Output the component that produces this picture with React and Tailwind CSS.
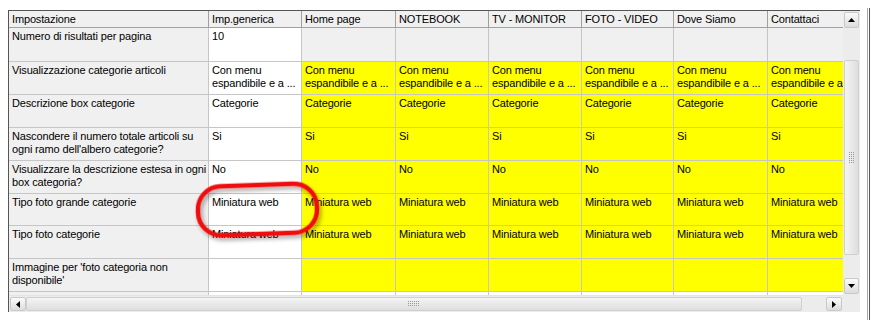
import React from "react";

const cols = [
  { name: "Home page", w: 94 },
  { name: "NOTEBOOK", w: 93 },
  { name: "TV - MONITOR", w: 93 },
  { name: "FOTO - VIDEO", w: 92 },
  { name: "Dove Siamo", w: 94 },
  { name: "Contattaci", w: 94 },
];

const rows = [
  { label: ["Numero di risultati per pagina"], gen: ["10"], val: null, h: 34 },
  { label: ["Visualizzazione categorie articoli"], gen: ["Con menu", "espandibile e a ..."], val: ["Con menu", "espandibile e a ..."], h: 33 },
  { label: ["Descrizione box categorie"], gen: ["Categorie"], val: ["Categorie"], h: 33 },
  { label: ["Nascondere il numero totale articoli su", "ogni ramo dell'albero categorie?"], gen: ["Si"], val: ["Si"], h: 33 },
  { label: ["Visualizzare la descrizione estesa in ogni", "box categoria?"], gen: ["No"], val: ["No"], h: 33 },
  { label: ["Tipo foto grande categorie"], gen: ["Miniatura web"], val: ["Miniatura web"], h: 32 },
  { label: ["Tipo foto categorie"], gen: ["Miniatura web"], val: ["Miniatura web"], h: 33 },
  { label: ["Immagine per 'foto categoria non", "disponibile'"], gen: [], val: [], h: 33 },
];

function Lines({ lines }) {
  return (
    <>
      {lines.map((l, i) => (
        <div key={i} className="whitespace-nowrap">{l}</div>
      ))}
    </>
  );
}

function Arrow({ dir }) {
  const pts = {
    up: "0,4 3.5,0 7,4",
    down: "0,0 3.5,4 7,0",
    left: "4,0 0,3.5 4,7",
    right: "0,0 4,3.5 0,7",
  }[dir];
  const w = dir === "up" || dir === "down" ? 7 : 4;
  const h = dir === "up" || dir === "down" ? 4 : 7;
  return (
    <svg width={w} height={h} viewBox={`0 0 ${w} ${h}`}>
      <polygon points={pts} fill="#000" />
    </svg>
  );
}

function Btn({ dir, className = "" }) {
  return (
    <div className={`flex items-center justify-center border border-[#c9c9c9] rounded-[2px] bg-gradient-to-b from-[#fbfbfb] to-[#dcdcdc] ${className}`}>
      <Arrow dir={dir} />
    </div>
  );
}

function Grip({ vertical }) {
  const dots = [];
  const nx = vertical ? 3 : 6;
  const ny = vertical ? 6 : 3;
  for (let y = 0; y < ny; y++)
    for (let x = 0; x < nx; x++)
      dots.push(<rect key={`${x}-${y}`} x={x * 2} y={y * 2} width="1" height="1" fill="#9a9a9a" />);
  return (
    <svg width={nx * 2} height={ny * 2}>{dots}</svg>
  );
}

export default function App() {
  return (
    <div className="relative w-[879px] h-[320px] bg-white overflow-hidden text-[11px] leading-[13px] tracking-[-0.15px] text-black" style={{ fontFamily: '"Liberation Sans", Arial, sans-serif' }}>
      <div className="absolute left-[867px] top-[8px] bottom-0 w-[3px] border-l border-[#a8a8a8] border-r border-r-[#5a5a5a]" />
      <div className="ml-[8px] mt-[10px] w-[852px] h-[302px] border-l border-t border-[#555] flex">
        {/* main area */}
        <div className="w-[834px] flex flex-col">
          <div className="h-[284px] overflow-hidden flex flex-col">
            {/* header */}
            <div className="flex h-[17px] shrink-0 bg-[#f0f0f0] border-b border-[#a0a0a0] leading-[16px]">
              <div className="w-[200px] shrink-0 border-r border-[#a0a0a0] pl-[3px]">Impostazione</div>
              <div className="w-[93px] shrink-0 border-r border-[#a0a0a0] pl-[3px]">Imp.generica</div>
              {cols.map((c) => (
                <div key={c.name} style={{ width: c.w }} className="shrink-0 border-r border-[#a0a0a0] pl-[3px] whitespace-nowrap">{c.name}</div>
              ))}
            </div>
            {rows.map((r, i) => (
              <div key={i} className="flex shrink-0" style={{ height: r.h }}>
                <div className="w-[200px] shrink-0 bg-[#f0f0f0] border-r border-b border-[#c6c6c6] pl-[3px] pt-[2px]">
                  <Lines lines={r.label} />
                </div>
                <div className="w-[93px] shrink-0 bg-white border-r border-b border-[#c6c6c6] pl-[3px] pt-[2px]">
                  <Lines lines={r.gen} />
                </div>
                {cols.map((c) => (
                  <div key={c.name} style={{ width: c.w }} className={`shrink-0 border-r border-b border-[#c6c6c6] pl-[3px] pt-[2px] overflow-hidden ${r.val ? "bg-[#ffff00]" : "bg-[#f0f0f0]"}`}>
                    {r.val && <Lines lines={r.val} />}
                  </div>
                ))}
              </div>
            ))}
            <div className="flex flex-1">
              <div className="w-[200px] shrink-0 bg-[#f0f0f0] border-r border-[#c6c6c6]" />
              <div className="w-[93px] shrink-0 bg-white border-r border-[#c6c6c6]" />
              {cols.map((c) => (
                <div key={c.name} style={{ width: c.w }} className="shrink-0 bg-white border-r border-[#c6c6c6]" />
              ))}
            </div>
          </div>
          {/* horizontal scrollbar */}
          <div className="h-[17px] bg-[#ececec] border-t border-[#e4e4e4] flex items-stretch px-[1px] py-[1px]">
            <Btn dir="left" className="w-[16px]" />
            <div className="w-[776px] flex items-center justify-center rounded-[2px] border border-[#cfcfcf] bg-gradient-to-b from-[#f4f4f4] to-[#dedede]">
              <Grip />
            </div>
            <div className="flex-1" />
            <Btn dir="right" className="w-[16px]" />
          </div>
        </div>
        {/* vertical scrollbar */}
        <div className="w-[17px] bg-[#ececec] flex flex-col px-[1px] py-[1px]">
          <Btn dir="up" className="h-[16px]" />
          <div className="h-[32px]" />
          <div className="h-[195px] flex items-center justify-center rounded-[2px] border border-[#cfcfcf] bg-gradient-to-r from-[#f4f4f4] to-[#dedede]">
            <Grip vertical />
          </div>
          <div className="flex-1" />
          <Btn dir="down" className="h-[16px]" />
          <div className="h-[17px]" />
        </div>
      </div>
      {/* red annotation */}
      <svg className="absolute left-0 top-0 pointer-events-none" width="879" height="320">
        <defs>
          <filter id="sh" x="-20%" y="-20%" width="140%" height="140%">
            <feDropShadow dx="2" dy="3" stdDeviation="2" floodColor="#000" floodOpacity="0.35" />
          </filter>
        </defs>
        <rect x="198" y="185" width="119" height="49" rx="23" ry="23" fill="none" stroke="#f01010" strokeWidth="4.5" filter="url(#sh)" transform="rotate(-2 258 210)" />
      </svg>
    </div>
  );
}
